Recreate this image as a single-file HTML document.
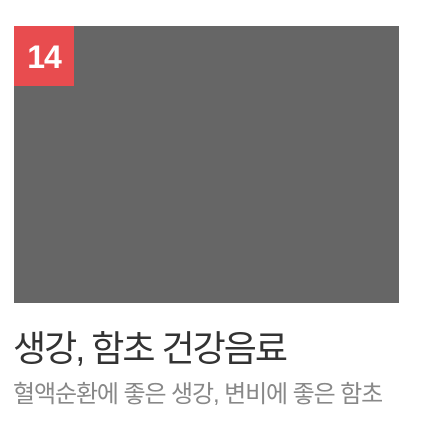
<!DOCTYPE html>
<html><head><meta charset="utf-8"><style>
html,body{margin:0;padding:0;background:#fff;width:429px;height:433px;overflow:hidden}
.img{position:absolute;left:14px;top:26px;width:385px;height:277px;background:#666}
.badge{position:absolute;left:14px;top:26px;width:60px;height:60px;background:#e84c4f;color:#fff;font:bold 32px "Liberation Sans",sans-serif;text-align:center;line-height:62px;letter-spacing:-1px}
.t{position:absolute;left:13px;top:326px;font-family:"Liberation Sans","Noto Sans CJK KR",sans-serif;font-size:36px;color:#333;letter-spacing:-2px;line-height:46px;white-space:nowrap}
.s{position:absolute;left:13px;top:378px;font-family:"Liberation Sans","Noto Sans CJK KR",sans-serif;font-size:24px;color:#888;letter-spacing:-1.1px;line-height:34px;white-space:nowrap}
</style></head><body>
<div class="img"></div>
<div class="badge">14</div>
<div class="t">생강, 함초 건강음료</div>
<div class="s">혈액순환에 좋은 생강, 변비에 좋은 함초</div>
</body></html>
